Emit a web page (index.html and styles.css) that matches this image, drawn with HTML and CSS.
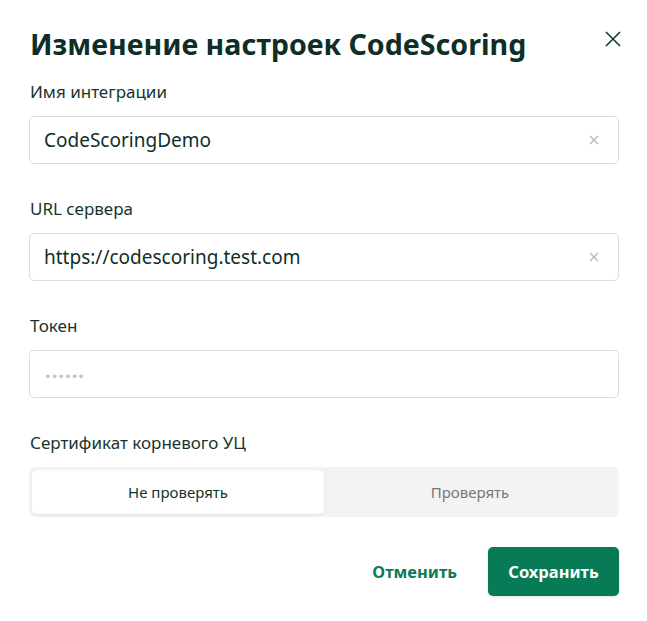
FILE: index.html
```html
<!DOCTYPE html>
<html lang="ru">
<head>
  <meta charset="UTF-8">
  <meta name="viewport" content="width=device-width, initial-scale=1.0">
  <title>Изменение настроек CodeScoring</title>
  <link rel="stylesheet" href="styles.css">
</head>
<body>
  <div class="dialog">
    <div class="dialog-header">
      <h1>Изменение настроек CodeScoring</h1>
      <button type="button" class="close" aria-label="Закрыть">
        <svg width="16" height="16" viewBox="0 0 16 16"><path d="M1 1L15 15M15 1L1 15" stroke="#153a31" stroke-width="1.6" fill="none"/></svg>
      </button>
    </div>

    <form id="settingsForm">
      <div class="form-group">
        <label for="name">Имя интеграции</label>
        <div class="field">
          <input type="text" id="name" value="CodeScoringDemo">
          <span class="clear">
            <svg width="10" height="10" viewBox="0 0 10 10"><path d="M1 1L9 9M9 1L1 9" stroke="#b8b8b8" stroke-width="1.4" fill="none"/></svg>
          </span>
        </div>
      </div>
      <div class="form-group">
        <label for="url">URL сервера</label>
        <div class="field">
          <input type="text" id="url" value="https://codescoring.test.com">
          <span class="clear">
            <svg width="10" height="10" viewBox="0 0 10 10"><path d="M1 1L9 9M9 1L1 9" stroke="#b8b8b8" stroke-width="1.4" fill="none"/></svg>
          </span>
        </div>
      </div>
      <div class="form-group">
        <label for="token">Токен</label>
        <div class="field">
          <input type="password" id="token" placeholder="••••••">
        </div>
      </div>
      <div class="form-group">
        <label>Сертификат корневого УЦ</label>
        <div class="segmented">
          <button type="button" class="segment active">Не проверять</button>
          <button type="button" class="segment">Проверять</button>
        </div>
      </div>

      <div class="actions">
        <button type="button" class="btn-link">Отменить</button>
        <button type="button" class="btn-primary">Сохранить</button>
      </div>
    </form>
  </div>

  <script>
    document.querySelectorAll('.segment').forEach(seg => {
      seg.addEventListener('click', function() {
        document.querySelectorAll('.segment').forEach(s => s.classList.remove('active'));
        this.classList.add('active');
      });
    });

    document.querySelectorAll('.clear').forEach(btn => {
      btn.addEventListener('click', function() {
        this.previousElementSibling.value = '';
      });
    });
  </script>
</body>
</html>
```

FILE: styles.css
```css
body {
  font-family: "Noto Sans", Arial, sans-serif;
  margin: 0;
  padding: 0;
  background-color: #fff;
  color: #11332b;
}
.dialog {
  padding: 24px 28px 24px 29px;
}
.dialog-header {
  display: flex;
  justify-content: space-between;
  align-items: flex-start;
}
.dialog-header h1 {
  margin: 0 0 16px 1px;
  font-size: 28.6px;
  line-height: 40px;
  font-weight: 700;
  color: #0e2f28;
}
.close {
  background: none;
  border: none;
  padding: 0;
  margin: 7px 0 0 0;
  cursor: pointer;
  width: 16px;
  height: 16px;
  margin-right: -2px;
}
.close svg {
  display: block;
}
.form-group {
  margin-bottom: 33px;
}
.form-group label {
  display: block;
  font-size: 17px;
  line-height: 24px;
  margin: 0 0 12px 1px;
  color: #17352e;
}
.field {
  position: relative;
}
.field input {
  box-sizing: border-box;
  width: 100%;
  height: 48px;
  padding: 0 40px 0 14px;
  border: 1px solid #dcdcdc;
  border-radius: 5px;
  font-family: inherit;
  font-size: 19px;
  color: #0e2f28;
  outline: none;
}
.field input::placeholder {
  color: #c4c4c4;
  font-family: "DejaVu Sans", sans-serif;
  font-size: 13px;
  letter-spacing: -1px;
}
.clear {
  position: absolute;
  right: 20px;
  top: 19px;
  width: 10px;
  height: 10px;
  cursor: pointer;
}
.clear svg {
  display: block;
}
.segmented {
  display: flex;
  background-color: #f3f3f3;
  border-radius: 6px;
  padding: 3px;
  height: 50px;
  box-sizing: border-box;
}
.segment {
  flex: 1;
  border: none;
  background: none;
  border-radius: 5px;
  font-family: inherit;
  font-size: 15px;
  color: #777;
  cursor: pointer;
}
.segment.active {
  background-color: #fff;
  color: #12332b;
  box-shadow: 0 1px 3px rgba(0, 0, 0, 0.08);
}
.actions {
  display: flex;
  justify-content: flex-end;
  align-items: center;
  gap: 16px;
  margin-top: -3px;
}
.btn-link {
  background: none;
  border: none;
  padding: 0 15px;
  font-family: inherit;
  font-size: 16.5px;
  font-weight: 700;
  color: #0b7a55;
  cursor: pointer;
}
.btn-primary {
  height: 49px;
  width: 131px;
  border: none;
  border-radius: 5px;
  background-color: #087b56;
  color: #fff;
  font-family: inherit;
  font-size: 16.5px;
  font-weight: 700;
  cursor: pointer;
  box-shadow: 0 1px 3px rgba(0, 0, 0, 0.12);
}
```
